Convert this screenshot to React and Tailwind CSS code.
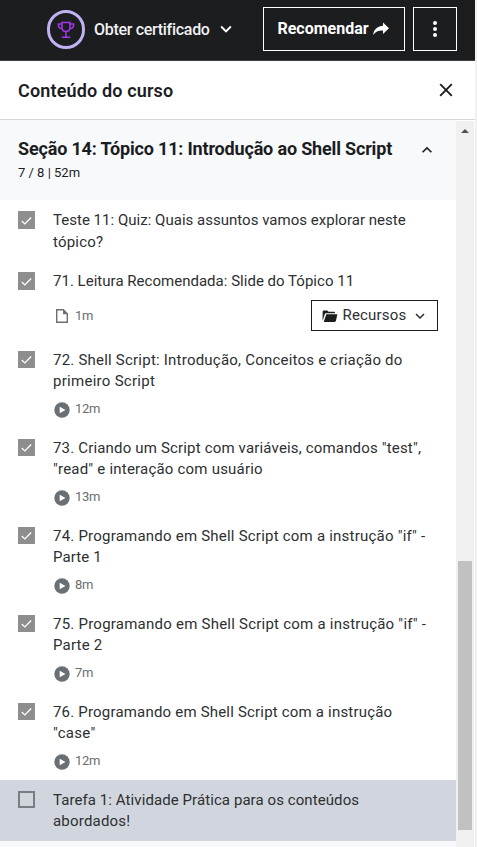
import React from "react";

const CHEVRON_DOWN = "M7.41 8.59 12 13.17l4.59-4.58L18 10l-6 6-6-6z";
const CHEVRON_UP = "M7.41 15.41 12 10.83l4.59 4.58L18 14l-6-6-6 6z";

function Glyph({ d, className }) {
  return (
    <svg viewBox="0 0 24 24" fill="currentColor" className={className}>
      <path d={d} />
    </svg>
  );
}

function Header() {
  return (
    <header className="flex h-[61px] shrink-0 items-start border-b border-[#3e4143] bg-[#1c1d1f] pt-[7px] pl-[47px] text-white">
      <div className="mt-[3px] flex h-[39px] w-[38px] items-center justify-center rounded-full border-[3px] border-[#c0b2f2]">
        <svg viewBox="0 0 18 18" fill="none" stroke="#a435f0" strokeWidth="1.5" className="h-[18px] w-[18px]">
          <path d="M5 1.6h8v5.2c0 2.2-1.7 3.7-4 3.7S5 9 5 6.800zM5 3H1.400v1.200C1.400 6.300 3 7.500 5.200 7.500M13 3h3.600v1.200c0 2.100-1.600 3.300-3.800 3.300M9 10.500V16M4.800 16.200h8.400" />
        </svg>
      </div>
      <span className="mt-[11px] ml-[9px] w-[117px] text-[16px] leading-6 font-medium whitespace-nowrap tracking-[-0.3px] text-[#f0f1f3]">
        Obter certificado
      </span>
      <Glyph d={CHEVRON_DOWN} className="mt-[11px] ml-[4px] h-[22px] w-[22px]" />
      <button className="ml-[26px] flex h-[44px] w-[142px] items-center border border-white pl-[13px] text-[16px] font-bold">
        <span className="w-[92px] whitespace-nowrap">Recomendar</span>
        <svg viewBox="0 0 16 14" fill="currentColor" className="ml-[4px] h-[14px] w-[16px]">
          <path d="M10 0.500 16 6.200 10 12V8.500C5.500 8.300 2.500 9.500.200 13 .500 8 4 4.200 10 3.800z" />
        </svg>
      </button>
      <button className="ml-[8px] flex h-[44px] w-[44px] flex-col items-center justify-center gap-[2px] border border-white">
        <i className="h-1 w-1 rounded-full bg-white" />
        <i className="h-1 w-1 rounded-full bg-white" />
        <i className="h-1 w-1 rounded-full bg-white" />
      </button>
    </header>
  );
}

function Duration({ kind, children }) {
  return (
    <div className="flex items-center text-[13px] leading-[18px] text-[#6a6f73]">
      {kind === "file" ? (
        <svg viewBox="0 0 16 16" className="mt-px mr-[5px] h-4 w-4">
          <path d="M2.700 1.700h6.600l4 4v8.600H2.700z" fill="none" stroke="#6a6f73" strokeWidth="1.400" />
          <path d="M9 1.500v4.700h4.500z" fill="#6a6f73" />
        </svg>
      ) : (
        <svg viewBox="0 0 16 16" className="mt-[2px] mr-[5px] h-4 w-4">
          <circle cx="8" cy="8" r="7.700" fill="#6a6f73" />
          <path d="M5.700 4.700 11.500 8l-5.800 3.300z" fill="#fff" />
        </svg>
      )}
      <span className="tracking-[-0.3px]">{children}</span>
    </div>
  );
}

function Item({ lines, time, kind, resources, open, tall }) {
  return (
    <li className={"flex shrink-0 pl-[18px] " + (open ? "h-[61px] bg-[#d1d6de]" : time ? (resources ? "h-[79px]" : "h-[88px]") : "h-[61px]")}>
      {open ? (
        <span className="mt-[11px] h-[17px] w-[17px] border-2 border-[#797c80]" />
      ) : (
        <span className={"mt-[11px] flex w-[17px] items-center justify-center bg-[#8e8e8f] " + (tall ? "h-[18px]" : "h-[17px]")}>
          <svg viewBox="0 0 17 17" fill="none" stroke="#fff" strokeWidth="1.300" className="h-[17px] w-[17px]">
            <path d="m3.800 9 3 2.900L13.200 5.500" />
          </svg>
        </span>
      )}
      <div className="ml-[18px] w-[385px] pt-[10px]">
        {lines.map(([text, track]) => (
          <p key={text} className={"text-[15px] whitespace-nowrap text-[#2d2f31] " + (tall && !resources ? "leading-[21.5px] " : "leading-[21px] ") + track}>{text}</p>
        ))}
        {time && !resources && (
          <div className="mt-[8px] pl-px"><Duration kind={kind}>{time}</Duration></div>
        )}
        {resources && (
          <div className="mt-[8px] flex items-center justify-between pl-px">
            <Duration kind={kind}>{time}</Duration>
            <button className="flex h-[31px] w-[127px] items-center border border-[#1c1d1f] pl-[10px] text-[15px] text-[#2d2f31]">
              <svg viewBox="0 0 16 13" fill="#1c1d1f" className="h-[12px] w-4">
                <path d="M0 12V2C0 .8.700.500 1.500.500H5L6.500 2H12c1 0 1.500.500 1.500 1.500H4C3 3.500 2.500 4 2.200 5z" />
                <path d="M4 4.500h12l-1.500 7c-.200.800-.700 1.500-1.500 1.500H1.200z" />
              </svg>
              <span className="ml-[4px] w-[65px] tracking-[0.2px]">Recursos</span>
              <Glyph d={CHEVRON_DOWN} className="ml-[4px] h-[18px] w-[18px]" />
            </button>
          </div>
        )}
      </div>
    </li>
  );
}

const items = [
  { lines: [["Teste 11: Quiz: Quais assuntos vamos explorar neste", "tracking-[0.02px]"], ["tópico?", "tracking-[0.2px]"]], tall: true },
  { lines: [["71. Leitura Recomendada: Slide do Tópico 11", "tracking-[0.02px]"]], time: "1m", kind: "file", resources: true, tall: true },
  { lines: [["72. Shell Script: Introdução, Conceitos e criação do", "tracking-[0.22px]"], ["primeiro Script", "tracking-[0.28px]"]], time: "12m" },
  { lines: [['73. Criando um Script com variáveis, comandos "test",', "tracking-[0.17px]"], ['"read" e interação com usuário', "tracking-[0.21px]"]], time: "13m" },
  { lines: [['74. Programando em Shell Script com a instrução "if" -', "tracking-[0.22px]"], ["Parte 1", "tracking-[0.1px]"]], time: "8m" },
  { lines: [['75. Programando em Shell Script com a instrução "if" -', "tracking-[0.235px]"], ["Parte 2", "tracking-[0.2px]"]], time: "7m" },
  { lines: [["76. Programando em Shell Script com a instrução", "tracking-[0.19px]"], ['"case"', "tracking-[0.3px]"]], time: "12m" },
  { lines: [["Tarefa 1: Atividade Prática para os conteúdos", "tracking-[0.08px]"], ["abordados!", "tracking-[0.2px]"]], open: true },
];

export default function App() {
  return (
    <div className="flex h-[847px] w-[477px] overflow-hidden bg-[#f1f1f1] font-['Roboto',sans-serif]">
      <div className="flex w-[475px] flex-col bg-white">
        <Header />
        <div className="flex h-[59px] shrink-0 items-center justify-between border-b border-[#d1d7dc] pr-[21px] pl-[18px] text-[#1c1d1f]">
          <h2 className="text-[18px] font-semibold tracking-[0.15px]">Conteúdo do curso</h2>
          <svg viewBox="0 0 16 16" fill="none" stroke="currentColor" strokeWidth="1.9" className="h-4 w-4">
            <path d="m2.200 2.200 11.600 11.600M13.800 2.200 2.200 13.800" />
          </svg>
        </div>
        <div className="flex min-h-0 flex-1">
          <main className="flex w-[456px] flex-col bg-[#f7f9fa]">
            <section className="flex h-[80px] shrink-0 justify-between bg-[#f7f9fb] pt-[17px] pr-[19px] pl-[18px] text-[#1c1d1f]">
              <div>
                <h3 className="text-[18px] leading-6 font-bold whitespace-nowrap tracking-[-0.17px]">Seção 14: Tópico 11: Introdução ao Shell Script</h3>
                <p className="mt-[3px] text-[13px] leading-[18px]">7 / 8 | 52m</p>
              </div>
              <Glyph d={CHEVRON_UP} className="mt-[3px] h-5 w-5" />
            </section>
            <ul className="flex flex-col bg-white">
              {items.map((item) => <Item key={item.lines[0][0]} {...item} />)}
            </ul>
          </main>
          <div className="mt-px flex w-[18px] flex-col items-center bg-[#f0f0f0]">
            <svg viewBox="0 0 8 4" className="mt-[8px] h-1 w-2 shrink-0"><path d="M0 4 4 0l4 4z" fill="#505050" /></svg>
            <div className="mt-[428px] h-[269px] w-[14px] shrink-0 bg-[#c1c1c1]" />
          </div>
        </div>
      </div>
    </div>
  );
}
